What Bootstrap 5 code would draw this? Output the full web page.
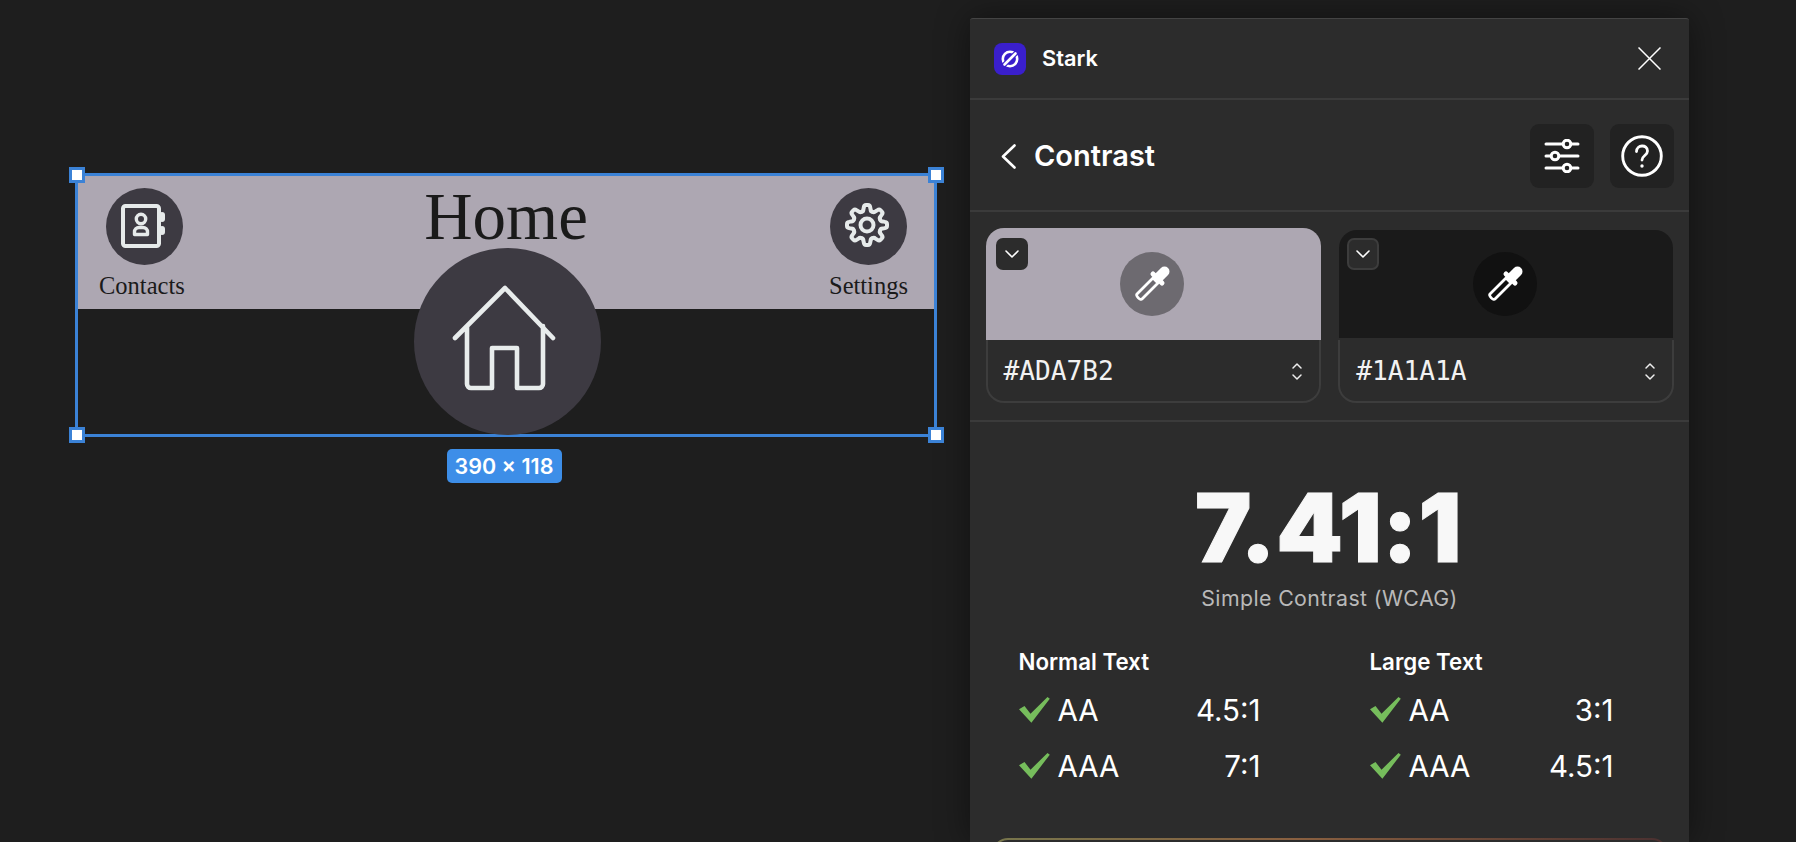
<!DOCTYPE html>
<html lang="en">
<head>
    <meta charset="UTF-8">
    <meta name="viewport" content="width=device-width, initial-scale=1.0">
    <title>Stark Contrast</title>
    <link href="https://cdn.jsdelivr.net/npm/bootstrap@5.3.0/dist/css/bootstrap.min.css" rel="stylesheet">
    <style>
        html, body { height: 842px; overflow: hidden; }
        body { background: #1e1e1e; font-family: "Inter", "Liberation Sans", sans-serif; color: #fff; }

        /* canvas side */
        .canvas-side { width: 970px; flex: none; padding: 173px 0 0 75px; }
        .frame-wrap { width: 862px; }
        .sel-frame { position: relative; width: 862px; height: 264px; border: 3px solid #3b82d6; }
        .top-band { height: 133px; background: #ada7b2; padding: 12px 27px 0 21px; color: #1a1a1a; font-family: "Liberation Serif", serif; }
        .app-tab { width: 87px; }
        .app-tab.right-tab { width: 78px; }
        .tab-icon { width: 77px; height: 77px; display: block; margin-left: 7px; }
        .right-tab .tab-icon { margin-left: 1px; }
        .tab-label { font-size: 24.5px; line-height: 28px; margin-top: 7px; white-space: nowrap; }
        .home-title { font-size: 67px; line-height: 66px; margin-top: -5px; margin-right: 3px; }
        .home-circle { position: absolute; left: 336px; top: 72px; width: 187px; height: 187px; }
        .handle { position: absolute; width: 16px; height: 16px; background: #fff; border: 3px solid #3b82d6; }
        .h-tl { left: -9px; top: -9px; }
        .h-tr { right: -10px; top: -9px; }
        .h-bl { left: -9px; bottom: -9px; }
        .h-br { right: -10px; bottom: -9px; }
        .dim-label { background: #3d8ee8; border-radius: 5px; width: 115px; height: 34px; margin-top: 12px; margin-right: 4px; font-size: 21.5px; font-weight: 600; line-height: 34px; text-align: center; white-space: nowrap; }

        /* plugin panel */
        .plugin-panel { width: 719px; height: 824px; flex: none; margin-top: 18px; background: #2c2c2c; border-top: 1px solid #444; border-radius: 3px 3px 0 0; box-shadow: 0 0 34px rgba(0,0,0,.45); overflow: hidden; }
        .sec-line { border-bottom: 2px solid #3b3b3b; }
        .plugin-head { height: 81px; padding: 0 28px 0 24px; }
        .stark-logo { width: 32px; height: 32px; display: block; }
        .stark-name { font-size: 21.8px; font-weight: 600; margin-left: 16px; }
        .sub-head { height: 112px; padding: 2px 15px 0 31px; }
        .sub-title { font-size: 29px; font-weight: 600; margin-left: 18px; }
        .tool-btn { width: 64px; height: 64px; background: #222; border-radius: 9px; display: flex; align-items: center; justify-content: center; }
        .swatch-row { height: 210px; padding: 16px 15px 0 15.500px; gap: 17px; }
        .swatch-card { flex: 1 1 0; height: 175px; }
        .swatch-top { position: relative; height: 112px; border-radius: 18px 18px 0 0; display: flex; align-items: center; justify-content: center; }
        .swatch-top.light { background: #ada7b2; }
        .swatch-top.dark { background: #1a1a1a; height: 108px; margin: 2px 1px 2px; }
        .drop-btn { position: absolute; left: 10px; top: 10px; width: 32px; height: 32px; background: #2c2c2c; border-radius: 7px; display: flex; align-items: center; justify-content: center; }
        .swatch-top.dark .drop-btn { left: 8px; top: 8px; border: 2px solid #3d3d3d; }
        .picker-dot { width: 64px; height: 64px; display: block; margin-right: 3px; }
        .swatch-foot { height: 63px; border: 2px solid #3d3d3d; border-top: 0; border-radius: 0 0 18px 18px; padding: 2px 16px 0 16px; }
        .hex-code { font-family: "DejaVu Sans Mono", "Liberation Mono", monospace; font-size: 26.200px; color: #f2f2f2; }
        .big-ratio { font-size: 95px; font-weight: 900; line-height: 95px; color: #f8f8f8; text-align: center; margin-top: 58px; margin-right: 2px; letter-spacing: .7px; -webkit-text-stroke: 1px #f8f8f8; }
        .ratio-note { font-size: 21.300px; line-height: 28px; color: #b9b9b9; text-align: center; margin-top: 9px; letter-spacing: .4px; }
        .level-cols { padding-left: 48.500px; gap: 109px; margin-top: 37px; }
        .level-col { width: 242px; }
        .level-col + .level-col { width: 244px; }
        .level-head { font-size: 22.300px; font-weight: 600; line-height: 26px; margin-bottom: 7px; }
        .level-row { height: 56px; font-size: 29.500px; }
        .pass-check { width: 31px; height: 26px; margin-right: 8px; display: block; }
        .fix-box { height: 50px; margin: 44px 21px 0 22px; padding: 2px 2px 0; border-radius: 16px 16px 0 0; background: linear-gradient(90deg, #77764c, #8a6040 45%, #4a3030); }
        .fix-inner { height: 100%; background: #2c2c2c; border-radius: 14px 14px 0 0; }
    </style>
</head>
<body>
<svg width="0" height="0" class="d-block">
    <defs>
        <polygon id="passMark" points="0,12.3 12.4,25.7 30.8,1.7 28.5,0 11.5,16.7 5.5,9" fill="#76bd5c"/>
        <path id="gearTooth" d="M-5.4-13.2Q-3.6-13.6-3.6-15.6L-3.1-18Q-2.8-20-1-20H1Q2.8-20 3.1-18L3.6-15.6Q3.6-13.6 5.4-13.2"/>
        <g id="picker">
            <path d="M17 42 33 26l5 5-16 16c-1.800 1.800-6.500-3.200-5-5Z" fill="none" stroke="#fff" stroke-width="2.800" stroke-linejoin="round"/>
            <path d="M33 22 42 31" stroke="#fff" stroke-width="5" stroke-linecap="round"/>
            <path d="M38.500 25.500 44.500 19.500" stroke="#fff" stroke-width="10" stroke-linecap="round"/>
        </g>
        <path id="chevDown" d="M3 6l6 6 6-6" fill="none" stroke="#fff" stroke-width="1.600" stroke-linecap="round" stroke-linejoin="round"/>
        <path id="chevPair" d="M2 6l4-4 4 4M2 13l4 4 4-4" fill="none" stroke="#eee" stroke-width="1.500" stroke-linecap="round" stroke-linejoin="round"/>
    </defs>
</svg>
<main class="d-flex">
    <section class="canvas-side">
        <div class="frame-wrap d-flex flex-column align-items-center">
            <div class="sel-frame w-100">
                <div class="top-band d-flex justify-content-between align-items-start">
                    <div class="app-tab">
                        <svg class="tab-icon" viewBox="0 0 77 77">
                            <circle cx="38.500" cy="38.500" r="38.500" fill="#3d3a42"/>
                            <rect x="17" y="18" width="36" height="40" rx="2.500" fill="none" stroke="#e6eaea" stroke-width="4"/>
                            <rect x="53" y="24" width="6" height="10" rx="3" fill="#e6eaea"/>
                            <rect x="53" y="38" width="6" height="9" rx="3" fill="#e6eaea"/>
                            <circle cx="35" cy="31" r="4.700" fill="none" stroke="#e6eaea" stroke-width="3.400"/>
                            <path d="M28.500 46.500V44c0-2.500 2-4.500 4.500-4.500h4c2.500 0 4.500 2 4.500 4.500v2.500Z" fill="none" stroke="#e6eaea" stroke-width="3.400" stroke-linejoin="round"/>
                        </svg>
                        <div class="tab-label">Contacts</div>
                    </div>
                    <div class="home-title">Home</div>
                    <div class="app-tab right-tab">
                        <svg class="tab-icon" viewBox="0 0 77 77">
                            <circle cx="38.500" cy="38.500" r="38.500" fill="#3d3a42"/>
                            <g transform="translate(37 37)" fill="none" stroke="#e6eaea" stroke-width="4" stroke-linecap="round" stroke-linejoin="round">
                                <use href="#gearTooth"/>
                                <use href="#gearTooth" transform="rotate(45)"/>
                                <use href="#gearTooth" transform="rotate(90)"/>
                                <use href="#gearTooth" transform="rotate(135)"/>
                                <use href="#gearTooth" transform="rotate(180)"/>
                                <use href="#gearTooth" transform="rotate(225)"/>
                                <use href="#gearTooth" transform="rotate(270)"/>
                                <use href="#gearTooth" transform="rotate(315)"/>
                                <circle r="6.500"/>
                            </g>
                        </svg>
                        <div class="tab-label">Settings</div>
                    </div>
                </div>
                <svg class="home-circle" viewBox="0 0 187 187">
                    <circle cx="93.500" cy="93.500" r="93.500" fill="#3d3a42"/>
                    <path d="M41 90 91 40l48 50M53 78v58a4 4 0 0 0 4 4h21v-40h25v40h22a4 4 0 0 0 4-4V78" fill="none" stroke="#e8ecec" stroke-width="4.600" stroke-linecap="round" stroke-linejoin="round"/>
                </svg>
                <span class="handle h-tl"></span>
                <span class="handle h-tr"></span>
                <span class="handle h-bl"></span>
                <span class="handle h-br"></span>
            </div>
            <div class="dim-label">390 × 118</div>
        </div>
    </section>

    <aside class="plugin-panel">
        <div class="plugin-head sec-line d-flex align-items-center">
            <svg class="stark-logo" viewBox="0 0 32 32">
                <rect width="32" height="32" rx="8" fill="#3a1fcc"/>
                <circle cx="16" cy="16" r="7.200" fill="none" stroke="#fff" stroke-width="2.600"/>
                <path d="M8 24 24 8" stroke="#3a1fcc" stroke-width="5"/>
                <path d="M10.500 21.500 21.500 10.500" stroke="#fff" stroke-width="2.600" stroke-linecap="round"/>
            </svg>
            <div class="stark-name">Stark</div>
            <svg class="ms-auto" width="23" height="23" viewBox="0 0 23 23"><path d="M.5.500l22 22M22.500.500l-22 22" stroke="#fff" stroke-width="1.500"/></svg>
        </div>

        <div class="sub-head sec-line d-flex align-items-center">
            <svg width="15" height="25" viewBox="0 0 15 25"><path d="M13.500 1.500 2 12.500l11.500 11" fill="none" stroke="#fff" stroke-width="2.600" stroke-linecap="round" stroke-linejoin="round"/></svg>
            <div class="sub-title">Contrast</div>
            <div class="d-flex ms-auto gap-3">
                <div class="tool-btn">
                    <svg width="36" height="34" viewBox="0 0 36 34" fill="none" stroke="#fff">
                        <path d="M2 5H34M2 17H34M2 29H34" stroke-width="3" stroke-linecap="round"/>
                        <circle cx="23" cy="5" r="3.800" fill="#222" stroke-width="3"/>
                        <circle cx="11" cy="17" r="3.800" fill="#222" stroke-width="3"/>
                        <circle cx="23" cy="29" r="3.800" fill="#222" stroke-width="3"/>
                    </svg>
                </div>
                <div class="tool-btn">
                    <svg width="42" height="42" viewBox="0 0 42 42" fill="none" stroke="#fff">
                        <circle cx="21" cy="21" r="19.300" stroke-width="2.900"/>
                        <path d="M15.500 16.500c0-7 11-7.500 11-.5 0 4.500-5.500 4.500-5.500 9" stroke-width="2.800" stroke-linecap="round"/>
                        <circle cx="21" cy="31" r="1.700" fill="#fff" stroke="none"/>
                    </svg>
                </div>
            </div>
        </div>

        <div class="swatch-row sec-line d-flex">
            <div class="swatch-card">
                <div class="swatch-top light">
                    <div class="drop-btn"><svg width="18" height="18" viewBox="0 0 18 18"><use href="#chevDown"/></svg></div>
                    <svg class="picker-dot" viewBox="0 0 64 64"><circle cx="32" cy="32" r="32" fill="#6d6a70"/><use href="#picker"/></svg>
                </div>
                <div class="swatch-foot d-flex align-items-center justify-content-between">
                    <span class="hex-code">#ADA7B2</span>
                    <svg width="12" height="19" viewBox="0 0 12 19"><use href="#chevPair"/></svg>
                </div>
            </div>
            <div class="swatch-card">
                <div class="swatch-top dark">
                    <div class="drop-btn"><svg width="18" height="18" viewBox="0 0 18 18"><use href="#chevDown"/></svg></div>
                    <svg class="picker-dot" viewBox="0 0 64 64"><circle cx="32" cy="32" r="32" fill="#111"/><use href="#picker"/></svg>
                </div>
                <div class="swatch-foot d-flex align-items-center justify-content-between">
                    <span class="hex-code">#1A1A1A</span>
                    <svg width="12" height="19" viewBox="0 0 12 19"><use href="#chevPair"/></svg>
                </div>
            </div>
        </div>

        <div class="big-ratio">7.41:1</div>
        <div class="ratio-note">Simple Contrast (WCAG)</div>

        <div class="level-cols d-flex">
            <div class="level-col">
                <div class="level-head">Normal Text</div>
                <div class="level-row d-flex align-items-center"><svg class="pass-check" viewBox="0 0 31 26"><use href="#passMark"/></svg><span>AA</span><span class="ms-auto">4.5:1</span></div>
                <div class="level-row d-flex align-items-center"><svg class="pass-check" viewBox="0 0 31 26"><use href="#passMark"/></svg><span>AAA</span><span class="ms-auto">7:1</span></div>
            </div>
            <div class="level-col">
                <div class="level-head">Large Text</div>
                <div class="level-row d-flex align-items-center"><svg class="pass-check" viewBox="0 0 31 26"><use href="#passMark"/></svg><span>AA</span><span class="ms-auto">3:1</span></div>
                <div class="level-row d-flex align-items-center"><svg class="pass-check" viewBox="0 0 31 26"><use href="#passMark"/></svg><span>AAA</span><span class="ms-auto">4.5:1</span></div>
            </div>
        </div>

        <div class="fix-box"><div class="fix-inner"></div></div>
    </aside>
</main>
<script src="https://cdn.jsdelivr.net/npm/bootstrap@5.3.0/dist/js/bootstrap.bundle.min.js"></script>
</body>
</html>
